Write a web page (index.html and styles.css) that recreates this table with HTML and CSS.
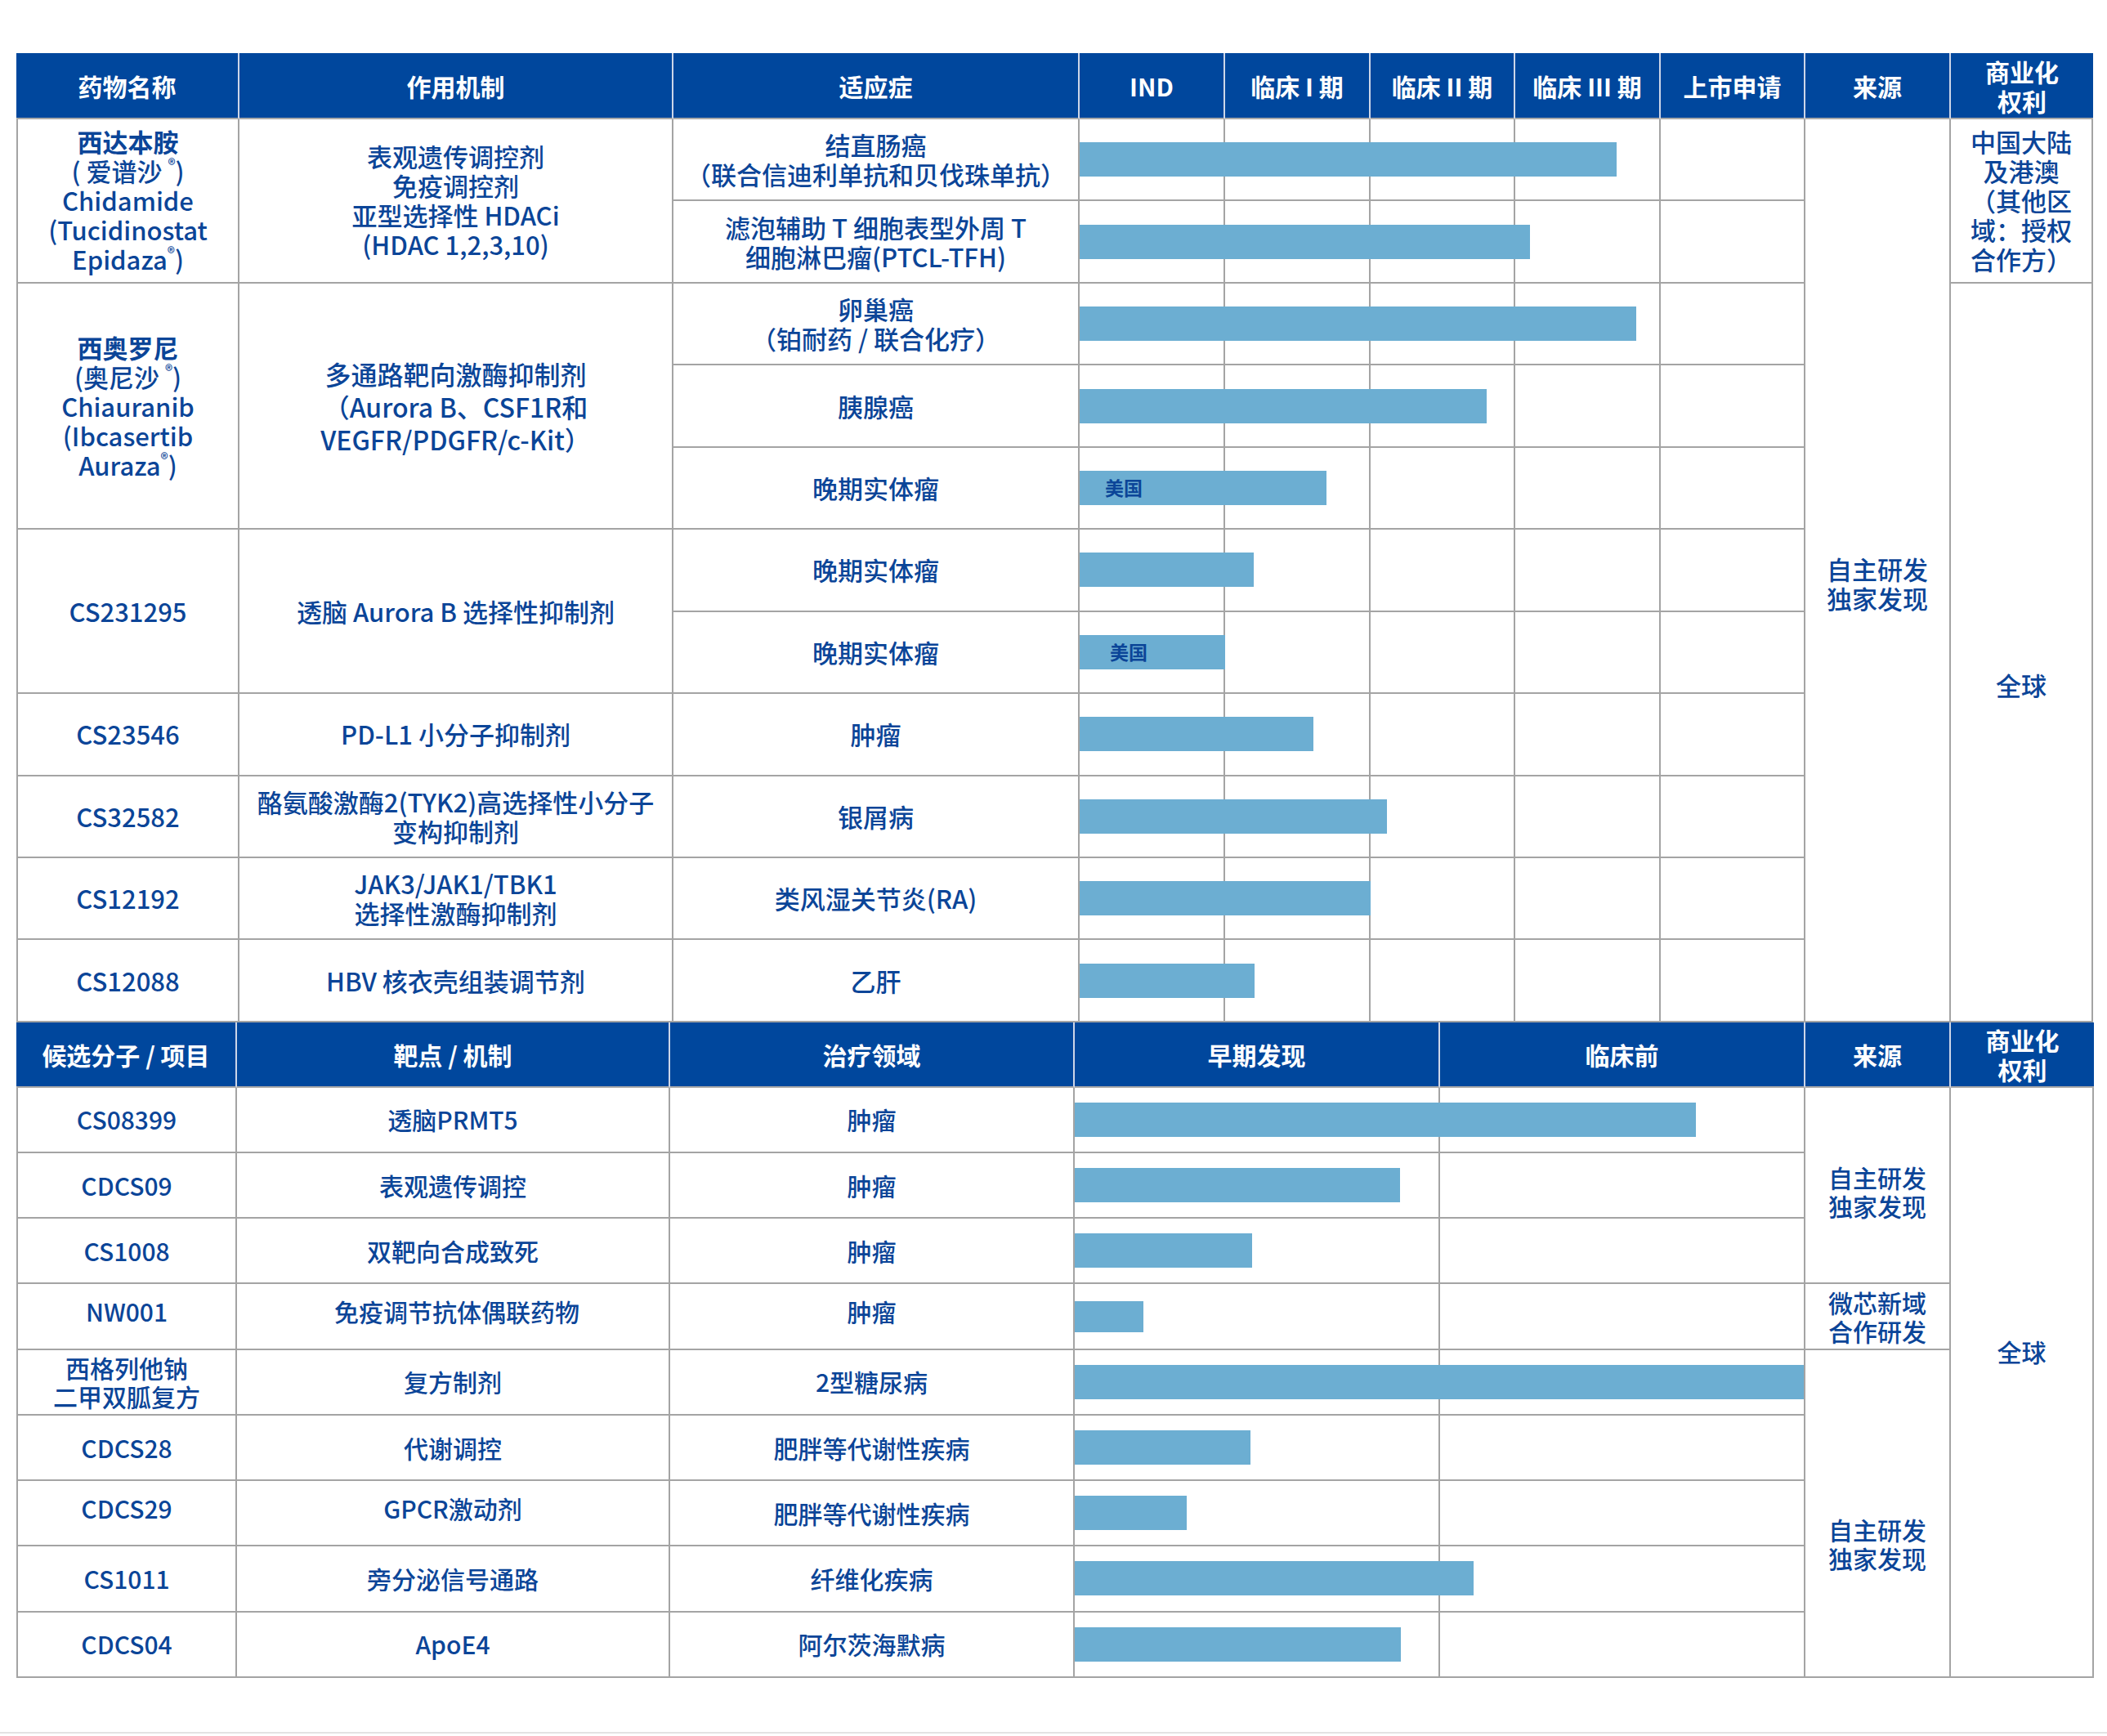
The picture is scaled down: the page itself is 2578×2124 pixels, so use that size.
FILE: index.html
```html
<!DOCTYPE html>
<html lang="zh-CN">
<head>
<meta charset="utf-8">
<title>研发管线</title>
<link rel="stylesheet" href="styles.css">
</head>
<body>
<div class="page">
  <div class="pipeline">
    <div class="hd">药物名称</div>
    <div class="hd">作用机制</div>
    <div class="hd">适应症</div>
    <div class="hd">IND</div>
    <div class="hd">临床 I 期</div>
    <div class="hd">临床 II 期</div>
    <div class="hd">临床 III 期</div>
    <div class="hd">上市申请</div>
    <div class="hd">来源</div>
    <div class="hd last">商业化<br>权利</div>

    <!-- row 1 -->
    <div class="cell first span2"><div><b>西达本胺</b><br>( 爱谱沙 <sup>®</sup>)<br>Chidamide<br>(Tucidinostat<br>Epidaza<sup>®</sup>)</div></div>
    <div class="cell span2"><div>表观遗传调控剂<br>免疫调控剂<br>亚型选择性 HDACi<br>(HDAC 1,2,3,10)</div></div>
    <div class="cell"><div>结直肠癌<br>（联合信迪利单抗和贝伐珠单抗）</div></div>
    <div class="cell stage"><span class="bar" style="width:657px"></span></div>
    <div class="cell stage"></div>
    <div class="cell stage"></div>
    <div class="cell stage"></div>
    <div class="cell stage"></div>
    <div class="cell span11 src-top">自主研发<br>独家发现</div>
    <div class="cell span2 narrow">中国大陆<br>及港澳<br>（其他区<br>域：授权<br>合作方）</div>

    <!-- row 2 -->
    <div class="cell"><div>滤泡辅助 T 细胞表型外周 T<br>细胞淋巴瘤(PTCL-TFH)</div></div>
    <div class="cell stage"><span class="bar" style="width:551px"></span></div>
    <div class="cell stage"></div>
    <div class="cell stage"></div>
    <div class="cell stage"></div>
    <div class="cell stage"></div>

    <!-- row 3 -->
    <div class="cell first span3"><div><b>西奥罗尼</b><br>(奥尼沙 <sup>®</sup>)<br>Chiauranib<br>(Ibcasertib<br>Auraza<sup>®</sup>)</div></div>
    <div class="cell span3 big"><div>多通路靶向激酶抑制剂<br>（Aurora B、CSF1R和<br>VEGFR/PDGFR/c-Kit）</div></div>
    <div class="cell"><div>卵巢癌<br>（铂耐药 / 联合化疗）</div></div>
    <div class="cell stage"><span class="bar" style="width:681px"></span></div>
    <div class="cell stage"></div>
    <div class="cell stage"></div>
    <div class="cell stage"></div>
    <div class="cell stage"></div>
    <div class="cell span9 global-top">全球</div>

    <!-- row 4 -->
    <div class="cell">胰腺癌</div>
    <div class="cell stage"><span class="bar" style="width:498px"></span></div>
    <div class="cell stage"></div>
    <div class="cell stage"></div>
    <div class="cell stage"></div>
    <div class="cell stage"></div>

    <!-- row 5 -->
    <div class="cell">晚期实体瘤</div>
    <div class="cell stage"><span class="bar" style="width:302px">美国</span></div>
    <div class="cell stage"></div>
    <div class="cell stage"></div>
    <div class="cell stage"></div>
    <div class="cell stage"></div>

    <!-- row 6 -->
    <div class="cell first span2">CS231295</div>
    <div class="cell span2">透脑 Aurora B 选择性抑制剂</div>
    <div class="cell">晚期实体瘤</div>
    <div class="cell stage"><span class="bar" style="width:213px"></span></div>
    <div class="cell stage"></div>
    <div class="cell stage"></div>
    <div class="cell stage"></div>
    <div class="cell stage"></div>

    <!-- row 7 -->
    <div class="cell">晚期实体瘤</div>
    <div class="cell stage"><span class="bar us2" style="width:178px">美国</span></div>
    <div class="cell stage"></div>
    <div class="cell stage"></div>
    <div class="cell stage"></div>
    <div class="cell stage"></div>

    <!-- row 8 -->
    <div class="cell first">CS23546</div>
    <div class="cell">PD-L1 小分子抑制剂</div>
    <div class="cell">肿瘤</div>
    <div class="cell stage"><span class="bar" style="width:286px"></span></div>
    <div class="cell stage"></div>
    <div class="cell stage"></div>
    <div class="cell stage"></div>
    <div class="cell stage"></div>

    <!-- row 9 -->
    <div class="cell first">CS32582</div>
    <div class="cell"><div>酪氨酸激酶2(TYK2)高选择性小分子<br>变构抑制剂</div></div>
    <div class="cell">银屑病</div>
    <div class="cell stage"><span class="bar" style="width:376px"></span></div>
    <div class="cell stage"></div>
    <div class="cell stage"></div>
    <div class="cell stage"></div>
    <div class="cell stage"></div>

    <!-- row 10 -->
    <div class="cell first">CS12192</div>
    <div class="cell"><div>JAK3/JAK1/TBK1<br>选择性激酶抑制剂</div></div>
    <div class="cell">类风湿关节炎(RA)</div>
    <div class="cell stage"><span class="bar" style="width:356px"></span></div>
    <div class="cell stage"></div>
    <div class="cell stage"></div>
    <div class="cell stage"></div>
    <div class="cell stage"></div>

    <!-- row 11 -->
    <div class="cell first">CS12088</div>
    <div class="cell">HBV 核衣壳组装调节剂</div>
    <div class="cell">乙肝</div>
    <div class="cell stage"><span class="bar" style="width:214px"></span></div>
    <div class="cell stage"></div>
    <div class="cell stage"></div>
    <div class="cell stage"></div>
    <div class="cell stage"></div>
  </div>

  <div class="discovery">
    <div class="hd">候选分子 / 项目</div>
    <div class="hd">靶点 / 机制</div>
    <div class="hd">治疗领域</div>
    <div class="hd">早期发现</div>
    <div class="hd">临床前</div>
    <div class="hd">来源</div>
    <div class="hd last">商业化<br>权利</div>

    <div class="cell first">CS08399</div>
    <div class="cell">透脑PRMT5</div>
    <div class="cell">肿瘤</div>
    <div class="cell stage"><span class="bar" style="width:760px"></span></div>
    <div class="cell stage"></div>
    <div class="cell span3 src-a">自主研发<br>独家发现</div>
    <div class="cell span9 global-bottom">全球</div>

    <div class="cell first">CDCS09</div>
    <div class="cell">表观遗传调控</div>
    <div class="cell">肿瘤</div>
    <div class="cell stage"><span class="bar" style="width:398px"></span></div>
    <div class="cell stage"></div>

    <div class="cell first">CS1008</div>
    <div class="cell">双靶向合成致死</div>
    <div class="cell">肿瘤</div>
    <div class="cell stage"><span class="bar" style="width:217px"></span></div>
    <div class="cell stage"></div>

    <div class="cell first lift">NW001</div>
    <div class="cell lift shift">免疫调节抗体偶联药物</div>
    <div class="cell lift">肿瘤</div>
    <div class="cell stage"><span class="bar thin" style="width:84px"></span></div>
    <div class="cell stage"></div>
    <div class="cell">微芯新域<br>合作研发</div>

    <div class="cell first"><div>西格列他钠<br>二甲双胍复方</div></div>
    <div class="cell">复方制剂</div>
    <div class="cell">2型糖尿病</div>
    <div class="cell stage"><span class="bar" style="width:892px"></span></div>
    <div class="cell stage"></div>
    <div class="cell span5 src-b">自主研发<br>独家发现</div>

    <div class="cell first">CDCS28</div>
    <div class="cell">代谢调控</div>
    <div class="cell">肥胖等代谢性疾病</div>
    <div class="cell stage"><span class="bar" style="width:215px"></span></div>
    <div class="cell stage"></div>

    <div class="cell first lift">CDCS29</div>
    <div class="cell lift">GPCR激动剂</div>
    <div class="cell">肥胖等代谢性疾病</div>
    <div class="cell stage"><span class="bar" style="width:137px"></span></div>
    <div class="cell stage"></div>

    <div class="cell first">CS1011</div>
    <div class="cell">旁分泌信号通路</div>
    <div class="cell">纤维化疾病</div>
    <div class="cell stage"><span class="bar" style="width:488px"></span></div>
    <div class="cell stage"></div>

    <div class="cell first">CDCS04</div>
    <div class="cell">ApoE4</div>
    <div class="cell">阿尔茨海默病</div>
    <div class="cell stage"><span class="bar" style="width:399px"></span></div>
    <div class="cell stage"></div>
  </div>

  <div class="rule"></div>
</div>
</body>
</html>
```

FILE: styles.css
```css
* {
  box-sizing: border-box;
}

html, body {
  margin: 0;
  padding: 0;
  background: #ffffff;
}

body {
  font-family: "Noto Sans CJK SC", "Noto Sans", sans-serif;
  color: #0b4598;
  width: 2578px;
  height: 2124px;
  overflow: hidden;
}

.page {
  padding: 65px 0 0 20px;
}

.pipeline {
  display: grid;
  width: 2541px;
  grid-template-columns: 273px 531px 497px 178px 178px 177px 178px 177px 178px 174px;
  grid-template-rows: 81px repeat(11, 100.45px);
}

.discovery {
  display: grid;
  width: 2542px;
  grid-template-columns: 270px 530px 495px 447px 447px 178px 175px;
  grid-template-rows: 80px repeat(9, 80.22px);
}

.hd {
  background: #00479d;
  color: #ffffff;
  font-weight: 700;
  font-size: 30px;
  line-height: 36px;
  display: flex;
  align-items: center;
  justify-content: center;
  text-align: center;
  border-right: 2px solid #cdd6e8;
  border-bottom: 2px solid #a9a9a9;
}

.hd.last {
  border-right: none;
}

.cell {
  display: flex;
  align-items: center;
  justify-content: center;
  text-align: center;
  font-size: 31px;
  font-weight: 500;
  line-height: 36px;
  border-right: 2px solid #a4a4a4;
  border-bottom: 2px solid #a4a4a4;
  white-space: nowrap;
}

.discovery .cell {
  font-size: 30px;
  line-height: 35px;
}

.cell.first {
  border-left: 2px solid #a4a4a4;
}

.cell b {
  font-weight: 700;
}

.cell sup {
  font-size: 0.6em;
  line-height: 0;
  vertical-align: 0.7em;
}

.span2 { grid-row: span 2; }
.span3 { grid-row: span 3; }
.span5 { grid-row: span 5; }
.span9 { grid-row: span 9; }
.span11 { grid-row: span 11; }

.big {
  font-size: 32px;
  line-height: 40px;
}

.stage {
  position: relative;
}

.bar {
  position: absolute;
  left: 0;
  top: 50%;
  height: 42px;
  margin-top: -21px;
  background: #6caed2;
  z-index: 1;
  display: flex;
  align-items: center;
  padding-left: 31px;
  font-size: 23px;
  font-weight: 700;
  line-height: 1;
  color: #0b4598;
}

.bar.us2 {
  padding-left: 37px;
}

.bar.thin {
  height: 38px;
  margin-top: -19px;
}

.src-top {
  padding-top: 34px;
}

.global-top {
  padding-top: 80px;
}

.src-a {
  padding-top: 16px;
}

.src-b {
  padding-top: 76px;
}

.global-bottom {
  padding-bottom: 74px;
}

.lift {
  padding-bottom: 12px;
}

.shift {
  padding-left: 10px;
}

.rule {
  margin-top: 66px;
  margin-left: -20px;
  width: 2578px;
  height: 2px;
  background: #e3e3e3;
}
```
